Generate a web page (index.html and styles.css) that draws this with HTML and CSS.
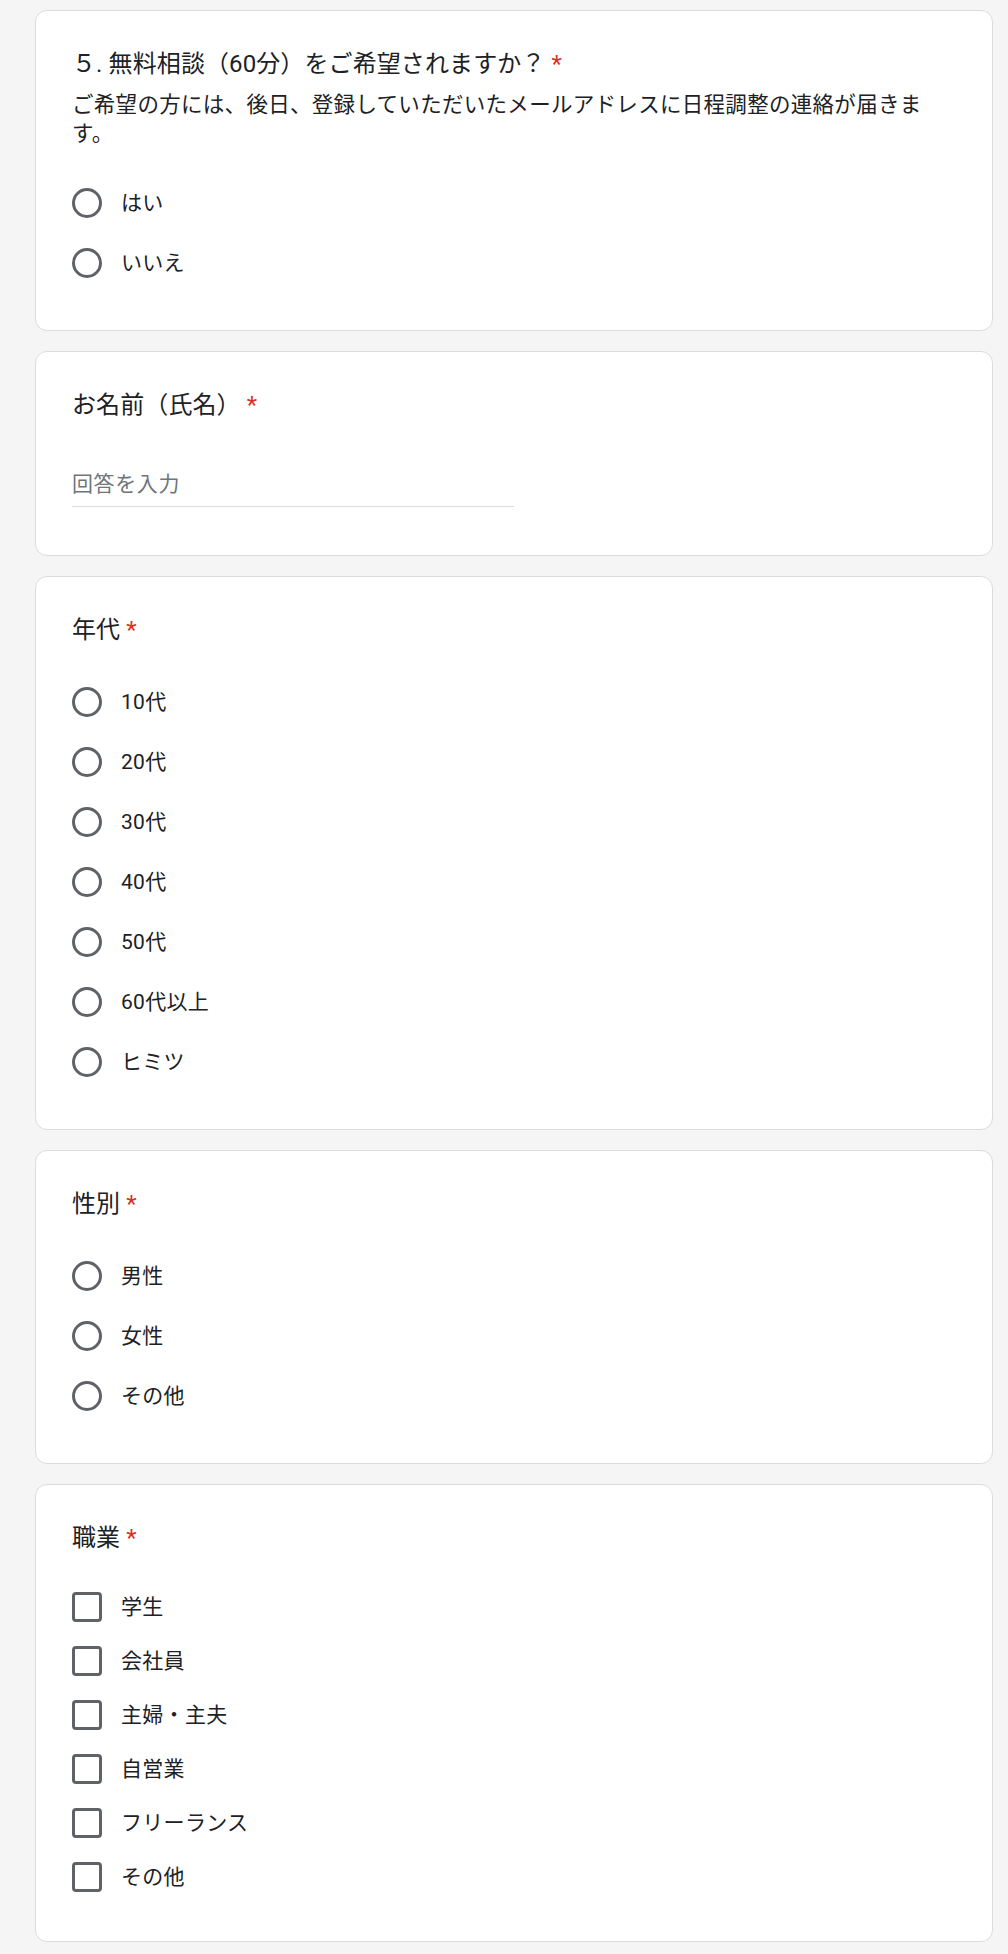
FILE: index.html
```html
<!DOCTYPE html>
<html lang="ja">
<head>
<meta charset="utf-8">
<title>フォーム</title>
<link rel="stylesheet" href="styles.css">
</head>
<body>
<main class="form">
  <section class="card">
    <div class="q-head">
      <div class="q-title">５. 無料相談（60分）をご希望されますか？ <span class="req">*</span></div>
      <div class="q-desc">ご希望の方には、後日、登録していただいたメールアドレスに日程調整の連絡が届きます。</div>
    </div>
    <div class="options">
      <label class="opt"><span class="radio"></span><span class="opt-label">はい</span></label>
      <label class="opt"><span class="radio"></span><span class="opt-label">いいえ</span></label>
    </div>
  </section>

  <section class="card">
    <div class="q-head">
      <div class="q-title">お名前（氏名） <span class="req">*</span></div>
    </div>
    <div class="text-input">
      <span class="placeholder">回答を入力</span>
    </div>
  </section>

  <section class="card">
    <div class="q-head">
      <div class="q-title">年代 <span class="req">*</span></div>
    </div>
    <div class="options">
      <label class="opt"><span class="radio"></span><span class="opt-label">10代</span></label>
      <label class="opt"><span class="radio"></span><span class="opt-label">20代</span></label>
      <label class="opt"><span class="radio"></span><span class="opt-label">30代</span></label>
      <label class="opt"><span class="radio"></span><span class="opt-label">40代</span></label>
      <label class="opt"><span class="radio"></span><span class="opt-label">50代</span></label>
      <label class="opt"><span class="radio"></span><span class="opt-label">60代以上</span></label>
      <label class="opt"><span class="radio"></span><span class="opt-label">ヒミツ</span></label>
    </div>
  </section>

  <section class="card">
    <div class="q-head">
      <div class="q-title">性別 <span class="req">*</span></div>
    </div>
    <div class="options">
      <label class="opt"><span class="radio"></span><span class="opt-label">男性</span></label>
      <label class="opt"><span class="radio"></span><span class="opt-label">女性</span></label>
      <label class="opt"><span class="radio"></span><span class="opt-label">その他</span></label>
    </div>
  </section>

  <section class="card">
    <div class="q-head">
      <div class="q-title">職業 <span class="req">*</span></div>
    </div>
    <div class="options">
      <label class="opt opt-check"><span class="check"></span><span class="opt-label">学生</span></label>
      <label class="opt opt-check"><span class="check"></span><span class="opt-label">会社員</span></label>
      <label class="opt opt-check"><span class="check"></span><span class="opt-label">主婦・主夫</span></label>
      <label class="opt opt-check"><span class="check"></span><span class="opt-label">自営業</span></label>
      <label class="opt opt-check"><span class="check"></span><span class="opt-label">フリーランス</span></label>
      <label class="opt opt-check"><span class="check"></span><span class="opt-label">その他</span></label>
    </div>
  </section>
</main>
</body>
</html>
```

FILE: styles.css
```css
* {
  box-sizing: border-box;
}

html, body {
  margin: 0;
  padding: 0;
  background: #f5f5f5;
}

body {
  font-family: Roboto, "Noto Sans CJK JP", "Noto Sans", sans-serif;
  color: #202124;
  min-height: 1954px;
}

.form {
  display: flex;
  flex-direction: column;
  gap: 20px;
  width: 958px;
  margin-left: 35px;
  padding-top: 10px;
  padding-bottom: 12px;
}

.card {
  background: #ffffff;
  border: 1px solid #dadce0;
  border-radius: 12px;
  padding: 36px 36px 36px 36px;
}

.q-head {
  margin-bottom: 25px;
}

.q-title {
  font-size: 24px;
  line-height: 34px;
  letter-spacing: 0.1px;
}

.req {
  color: #d93025;
}

.q-desc {
  margin-top: 9px;
  font-size: 21.5px;
  line-height: 29px;
  letter-spacing: 0.3px;
}

.options {
  display: flex;
  flex-direction: column;
  margin-bottom: 1px;
}

.opt {
  display: flex;
  align-items: center;
  height: 60px;
}

.opt-check {
  height: 54px;
}

.radio {
  flex: none;
  width: 30px;
  height: 30px;
  border: 3px solid #5f6368;
  border-radius: 50%;
}

.check {
  flex: none;
  width: 30px;
  height: 30px;
  border: 3px solid #5f6368;
  border-radius: 4px;
}

.opt-label {
  margin-left: 19px;
  font-size: 21px;
  line-height: 30px;
  letter-spacing: 0.3px;
}

.text-input {
  width: 442px;
  margin-top: 47px;
  padding-bottom: 7px;
  border-bottom: 1px solid #dadce0;
  margin-bottom: 12px;
}

.placeholder {
  display: block;
  font-size: 21px;
  line-height: 30px;
  letter-spacing: 0.6px;
  color: #70757a;
}
```
